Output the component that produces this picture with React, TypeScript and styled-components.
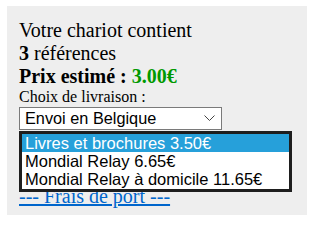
import React from 'react';
import styled, { createGlobalStyle } from 'styled-components';

const GlobalStyle = createGlobalStyle`
  html, body {
    margin: 0;
    padding: 0;
    background: #ffffff;
  }
  body {
    font-family: 'Liberation Serif', 'Times New Roman', serif;
  }
`;

const Panel = styled.div`
  margin: 6px 0 0 7px;
  width: 300px;
  min-height: 209px;
  box-sizing: border-box;
  padding: 13px 12px 0;
  background: #eeeeee;
  color: #000000;
`;

const Line = styled.div<{ $bold?: boolean }>`
  font-size: 20px;
  line-height: 23px;
  font-weight: ${(p) => (p.$bold ? 700 : 400)};
`;

const Price = styled.span`
  color: #009900;
`;

const Label = styled.div`
  font-size: 16px;
  line-height: 18px;
`;

const SelectWrap = styled.div`
  position: relative;
  width: 203px;
  margin-top: 1px;
`;

const SelectBox = styled.div`
  display: flex;
  align-items: center;
  justify-content: space-between;
  height: 23px;
  box-sizing: border-box;
  padding: 0 6px 0 5px;
  border: 1px solid #7a7a7a;
  background: #ffffff;
  font-family: 'Liberation Sans', Arial, sans-serif;
  font-size: 16.3px;
  color: #000000;
`;

const Options = styled.ul`
  position: absolute;
  top: 24px;
  left: 0;
  z-index: 2;
  margin: 0;
  padding: 0 0 1px;
  width: 273px;
  box-sizing: border-box;
  list-style: none;
  border: 3px solid #1e1e1e;
  background: #ffffff;
  font-family: 'Liberation Sans', Arial, sans-serif;
  font-size: 16.5px;
`;

const Option = styled.li<{ $active?: boolean }>`
  height: 18px;
  line-height: 18px;
  padding: 0 3px;
  white-space: nowrap;
  color: ${(p) => (p.$active ? '#ffffff' : '#000000')};
  background: ${(p) => (p.$active ? '#26a0da' : 'transparent')};
`;

const PortLink = styled.a`
  display: block;
  width: max-content;
  margin-top: 55px;
  font-size: 20px;
  line-height: 23px;
  color: #0066cc;
  text-decoration: underline;
`;

const Chevron = () => (
  <svg width="11" height="7" viewBox="0 0 11 7" fill="none">
    <path d="M0.5 0.5 L5.5 5.5 L10.5 0.5" stroke="#444" strokeWidth="1" />
  </svg>
);

const options = [
  'Livres et brochures 3.50€',
  'Mondial Relay 6.65€',
  'Mondial Relay à domicile 11.65€',
];

export default function App() {
  return (
    <>
      <GlobalStyle />
      <Panel>
        <Line>Votre chariot contient</Line>
        <Line>
          <b>3</b> références
        </Line>
        <Line $bold>
          Prix estimé : <Price>3.00€</Price>
        </Line>
        <Label>Choix de livraison :</Label>
        <SelectWrap>
          <SelectBox>
            <span>Envoi en Belgique</span>
            <Chevron />
          </SelectBox>
          <Options>
            {options.map((o, i) => (
              <Option key={o} $active={i === 0}>
                {o}
              </Option>
            ))}
          </Options>
        </SelectWrap>
        <PortLink href="#">--- Frais de port ---</PortLink>
      </Panel>
    </>
  );
}
